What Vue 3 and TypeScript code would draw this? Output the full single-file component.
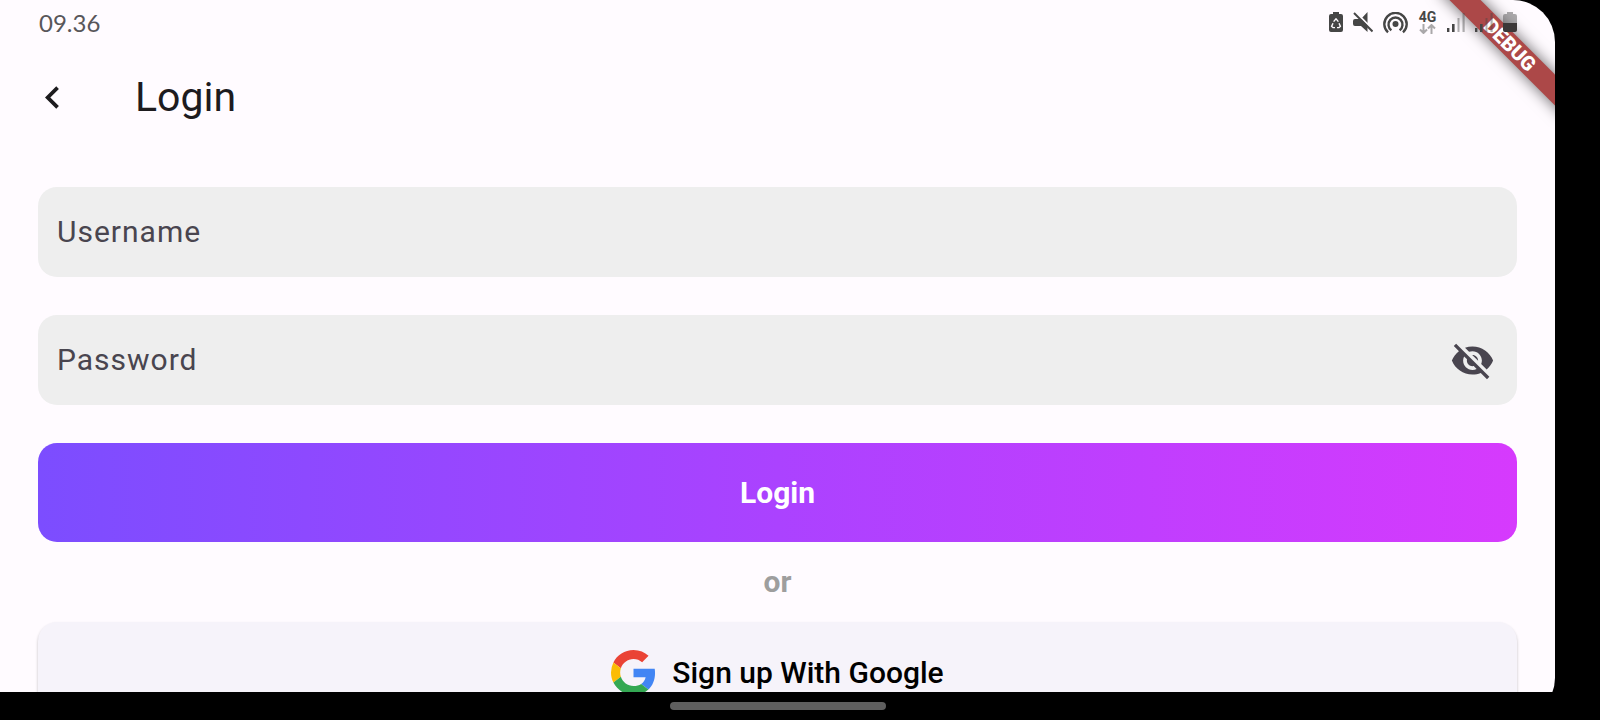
<script setup lang="ts">
import { ref } from 'vue'

const username = ref('')
const password = ref('')
const passwordVisible = ref(false)
</script>

<template>
  <div class="device">
    <div class="screen">
      <header class="status-bar">
        <time class="clock">09.36</time>
        <div class="status-icons">
          <svg width="14" height="22" viewBox="0 0 14 22" aria-hidden="true">
            <path fill="#464646" d="M4 0h6v2h2q2 0 2 2v14q0 2-2 2H2q-2 0-2-2V4q0-2 2-2h2z" />
            <path
              fill="none"
              stroke="#fffbff"
              stroke-width="1.4"
              d="M4.6 9.6 7 6.800l2.400 2.800M10 11.200l1.400 3.200-1.400 1.200H8M6 15.600H4l-1.400-1.200L4 11.200"
            />
          </svg>
          <svg width="20" height="22" viewBox="0 0 20 22" aria-hidden="true">
            <path fill="#464646" d="M14.500 0v20L8 14H2q-2 0-2-2V9q0-2 2-2h6z" />
            <path stroke="#fffbff" stroke-width="2" d="M2.400 0 20 17.600" />
            <path stroke="#464646" stroke-width="2" d="M1 1l18.500 18.500" />
          </svg>
          <svg width="25" height="22" viewBox="0 0 25 22" aria-hidden="true">
            <circle cx="12.5" cy="12" r="3" fill="#464646" />
            <g fill="none" stroke="#464646" stroke-width="2.4">
              <path d="M8.400 18.200a7 7 0 1 1 8.200 0" />
              <path d="M5 20.400a11.200 11.200 0 1 1 15 0" />
            </g>
          </svg>
          <span class="network">
            <span class="network-name">4G</span>
            <svg width="17" height="10" viewBox="0 0 17 10" aria-hidden="true">
              <path
                fill="none"
                stroke="#aaa8aa"
                stroke-width="2"
                d="M4.500 0v9M1 5.500l3.500 3.500L8 5.500M12.500 10V1M9 4.500 12.500 1 16 4.500"
              />
            </svg>
          </span>
          <svg v-for="sim in 2" :key="sim" width="18" height="22" viewBox="0 0 18 22" aria-hidden="true">
            <path fill="#464646" d="M0 16h2.400v4H0zM5 12h2.600v8H5z" />
            <path fill="#464646" fill-opacity=".42" d="M10.500 6h2v14h-2zM15.500 1h2.200v19h-2.200z" />
          </svg>
          <svg width="14" height="22" viewBox="0 0 14 22" aria-hidden="true">
            <path fill="#464646" fill-opacity=".45" d="M4 0h6v2h2q2 0 2 2v7H0V4q0-2 2-2h2z" />
            <path fill="#3c3838" d="M0 11h14v7q0 2-2 2H2q-2 0-2-2z" />
          </svg>
        </div>
      </header>

      <div class="app-bar">
        <button class="icon-button" type="button" aria-label="Back">
          <svg width="45" height="45" viewBox="0 0 24 24" aria-hidden="true">
            <path fill="currentColor" d="M15.410 16.590 10.830 12l4.580-4.590L14 6l-6 6 6 6z" />
          </svg>
        </button>
        <h1>Login</h1>
      </div>

      <main>
        <form @submit.prevent>
          <div class="field">
            <input id="username" v-model="username" type="text" autocomplete="username" />
            <label v-show="!username" for="username">Username</label>
          </div>
          <div class="field">
            <input
              id="password"
              v-model="password"
              :type="passwordVisible ? 'text' : 'password'"
              autocomplete="current-password"
            />
            <label v-show="!password" for="password">Password</label>
            <button
              class="icon-button"
              type="button"
              aria-label="Show password"
              :aria-pressed="passwordVisible"
              @click="passwordVisible = !passwordVisible"
            >
              <svg width="45" height="45" viewBox="0 0 24 24" aria-hidden="true">
                <path
                  fill="currentColor"
                  d="M12 7c2.76 0 5 2.24 5 5 0 .65-.13 1.26-.36 1.83l2.92 2.92c1.51-1.26 2.7-2.89 3.43-4.75-1.73-4.39-6-7.5-11-7.5-1.4 0-2.74.25-3.98.7l2.16 2.16C10.74 7.13 11.35 7 12 7zM2 4.27l2.28 2.28.46.46C3.08 8.3 1.78 10.02 1 12c1.73 4.39 6 7.5 11 7.5 1.55 0 3.03-.3 4.38-.84l.42.42L19.73 22 21 20.73 3.27 3 2 4.27zM7.53 9.8l1.55 1.55c-.05.21-.08.43-.08.65 0 1.66 1.34 3 3 3 .22 0 .44-.03.65-.08l1.55 1.55c-.67.33-1.41.53-2.2.53-2.76 0-5-2.24-5-5 0-.79.2-1.53.53-2.2zm4.31-.78 3.15 3.15.02-.16c0-1.66-1.34-3-3-3l-.17.01z"
                />
              </svg>
            </button>
          </div>
          <button class="login" type="submit">Login</button>
        </form>
        <p class="divider">or</p>
        <button class="google" type="button">
          <svg width="45" height="45" viewBox="0 0 48 48" aria-hidden="true">
            <path
              fill="#ea4335"
              d="M24 9.500c3.540 0 6.710 1.220 9.210 3.600l6.850-6.850C35.900 2.380 30.470 0 24 0 14.620 0 6.510 5.380 2.560 13.220l7.980 6.190C12.430 13.720 17.740 9.500 24 9.500z"
            />
            <path
              fill="#4285f4"
              d="M46.980 24.550c0-1.570-.15-3.090-.38-4.550H24v9.020h12.940c-.58 2.960-2.260 5.480-4.780 7.180l7.730 6c4.510-4.180 7.090-10.360 7.090-17.650z"
            />
            <path
              fill="#fbbc05"
              d="M10.530 28.590A14.500 14.500 0 0 1 9.770 24c0-1.600.27-3.140.76-4.590l-7.980-6.190A23.900 23.900 0 0 0 0 24c0 3.880.92 7.540 2.560 10.780z"
            />
            <path
              fill="#34a853"
              d="M24 48c6.480 0 11.930-2.130 15.890-5.810l-7.730-6c-2.150 1.450-4.920 2.300-8.160 2.300-6.260 0-11.570-4.220-13.470-9.910l-7.980 6.190C6.510 42.620 14.620 48 24 48z"
            />
          </svg>
          Sign up With Google
        </button>
      </main>
      <div class="ribbon">DEBUG</div>
    </div>

    <footer class="nav-bar"><span class="nav-handle"></span></footer>
  </div>
</template>

<style>
html,
body {
  margin: 0;
  background: #000;
}
</style>

<style scoped>
.device {
  display: flex;
  flex-direction: column;
  height: 100vh;
  margin-right: 45px;
  overflow: hidden;
  border-radius: 0 42px 42px 0;
  background: #000;
  color: #1d1b1e;
  font-family: Roboto, "Liberation Sans", sans-serif;
  font-size: 30px;
}

.screen {
  position: relative;
  display: flex;
  flex: 1;
  flex-direction: column;
  min-height: 0;
  overflow: hidden;
  background: #fffbff;
}

button {
  border: 0;
  font: inherit;
  cursor: pointer;
}

svg {
  display: block;
  flex: none;
}

.status-bar {
  position: relative;
  z-index: 2;
  display: flex;
  flex: none;
  align-items: center;
  justify-content: space-between;
  height: 45px;
  padding: 0 38px 0 39px;
}

.clock {
  padding-bottom: 1px;
  color: #58565a;
  font-family: Lato, sans-serif;
  font-size: 24px;
}

.status-icons {
  display: flex;
  align-items: center;
  gap: 10px;
}

.network {
  display: flex;
  flex-direction: column;
  align-items: center;
  gap: 2px;
  width: 19px;
}

.network-name {
  color: #464646;
  font-size: 14px;
  font-weight: 700;
  line-height: 10px;
}

.app-bar {
  display: flex;
  flex: none;
  align-items: center;
  gap: 60px;
  height: 105px;
  padding: 0 30px;
}

h1 {
  margin: 0;
  padding-bottom: 2px;
  font-size: 41px;
  font-weight: 400;
}

.icon-button {
  padding: 0;
  background: none;
  color: inherit;
}

main {
  display: flex;
  flex: 1;
  flex-direction: column;
  min-height: 0;
  padding: 37px 38px 0;
}

form {
  display: flex;
  flex: none;
  flex-direction: column;
  gap: 38px;
}

.field {
  display: grid;
  grid-template-columns: 1fr auto;
  align-items: center;
  height: 90px;
  border-radius: 19px;
  background: #eee;
  color: #49454f;
}

.field input {
  grid-area: 1 / 1;
  box-sizing: border-box;
  width: 100%;
  height: 100%;
  padding: 0 19px;
  border: 0;
  border-radius: 19px;
  outline: 0;
  background: none;
  color: #1d1b1e;
  font: inherit;
}

.field label {
  grid-area: 1 / 1;
  justify-self: start;
  padding: 0 0 2px 19px;
  letter-spacing: 1px;
  cursor: text;
}

.field .icon-button {
  grid-area: 1 / 2;
  margin-right: 22px;
}

.login {
  height: 99px;
  padding: 0;
  border-radius: 19px;
  background: linear-gradient(90deg, #7c4dff, #ab42ff 50%, #d63afd);
  color: #fff;
  font-weight: 700;
}

.divider {
  flex: none;
  margin: 0;
  color: #9e9e9e;
  font-weight: 700;
  line-height: 80px;
  text-align: center;
}

.google {
  display: flex;
  flex: none;
  align-items: center;
  justify-content: center;
  gap: 16px;
  height: 101px;
  padding: 0;
  border-radius: 19px;
  background: #f6f3fa;
  box-shadow: 0 2px 3px rgba(0, 0, 0, 0.25);
  color: #000;
  font-weight: 500;
}

.nav-bar {
  display: flex;
  flex: none;
  align-items: center;
  justify-content: center;
  height: 28px;
}

.nav-handle {
  width: 216px;
  height: 8px;
  border-radius: 4px;
  background: #5e5e5e;
}

.ribbon {
  position: absolute;
  z-index: 1;
  top: 34px;
  right: -45px;
  width: 180px;
  background: #ac4848;
  box-shadow: 0 0 15px rgba(0, 0, 0, 0.6);
  color: #fff;
  font-size: 20px;
  font-weight: 900;
  line-height: 22px;
  text-align: center;
  transform: rotate(45deg);
}
</style>
